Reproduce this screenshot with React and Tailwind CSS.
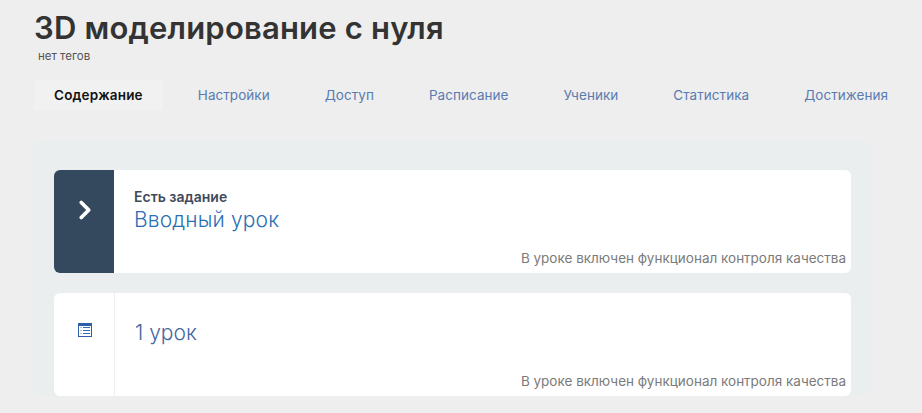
import { ChevronRight } from 'lucide-react';

const tabs = ['Содержание', 'Настройки', 'Доступ', 'Расписание', 'Ученики', 'Статистика', 'Достижения'];

const ListIcon = () => (
  <svg width="14" height="14" viewBox="0 0 14 14" className="block" shapeRendering="crispEdges">
    <rect x="0.5" y="0.5" width="13" height="13" fill="#fff" stroke="#2f5fa8" />
    <rect x="1" y="1" width="12" height="2" fill="#2f5fa8" />
    <path d="M2 4.5h2M2 7.5h2M2 10.5h2" stroke="#a9bcd9" />
    <path d="M5 4.5h7M5 7.5h7M5 10.5h7" stroke="#2f6fb5" />
  </svg>
);

const LessonCard = ({ active, label, title }) => (
  <div className="flex h-[103px] rounded-md bg-white overflow-hidden">
    {active ? (
      <div className="w-[60px] shrink-0 bg-[#34495e] flex justify-center pt-[25px] text-white">
        <ChevronRight size={30} strokeWidth={3} className="block ml-[1px]" />
      </div>
    ) : (
      <div className="w-[61px] shrink-0 border-r border-[#eeeeee] flex justify-center pt-[30px] pl-[1px]">
        <ListIcon />
      </div>
    )}
    <div className="flex-1 min-w-0 flex flex-col pl-[20px] pr-[5px]">
      <div className={active ? 'pt-[18px]' : 'pt-[26px]'}>
        {label && <div className="text-[14px] leading-[18px] font-semibold text-[#3f4a5a]">{label}</div>}
        <div className={`text-[21px] leading-[28px] font-light ${active ? 'text-[#2a70b5] tracking-[0.15px]' : 'text-[#46689f]'}`}>{title}</div>
      </div>
      <div className="mt-auto pb-[6px] text-right text-[13.5px] leading-[18px] text-[#7b7b7b]">
        В уроке включен функционал контроля качества
      </div>
    </div>
  </div>
);

export default function App() {
  return (
    <div className="h-[413px] overflow-hidden bg-[#eeeeee] font-[Inter,sans-serif]">
      <div className="pl-[34px] pt-[9px]">
        <h1 className="text-[31px] leading-[38px] font-semibold text-[#333333] tracking-[0.2px]">3D моделирование с нуля</h1>
        <div className="pl-[4px] mt-[2px] text-[11.5px] leading-[14px] text-[#555555]">нет тегов</div>
        <div className="mt-[17px] flex gap-[15px] whitespace-nowrap">
          {tabs.map((tab, i) => (
            <div
              key={tab}
              className={`h-[30px] px-[20px] flex items-center text-[13.5px] ${
                i === 0 ? 'bg-[#f1f1f1] font-semibold text-[#111111] tracking-[0.2px]' : 'text-[#5a7bb0] tracking-[0.05px]'
              }`}
            >
              {tab}
            </div>
          ))}
        </div>
      </div>
      <div className="ml-[33px] mt-[30px] w-[838px] bg-[#ebeeef] rounded-md pt-[30px] pl-[21px] pr-[20px] flex flex-col gap-[20px]">
        <LessonCard active label="Есть задание" title="Вводный урок" />
        <LessonCard title="1 урок" />
      </div>
    </div>
  );
}
